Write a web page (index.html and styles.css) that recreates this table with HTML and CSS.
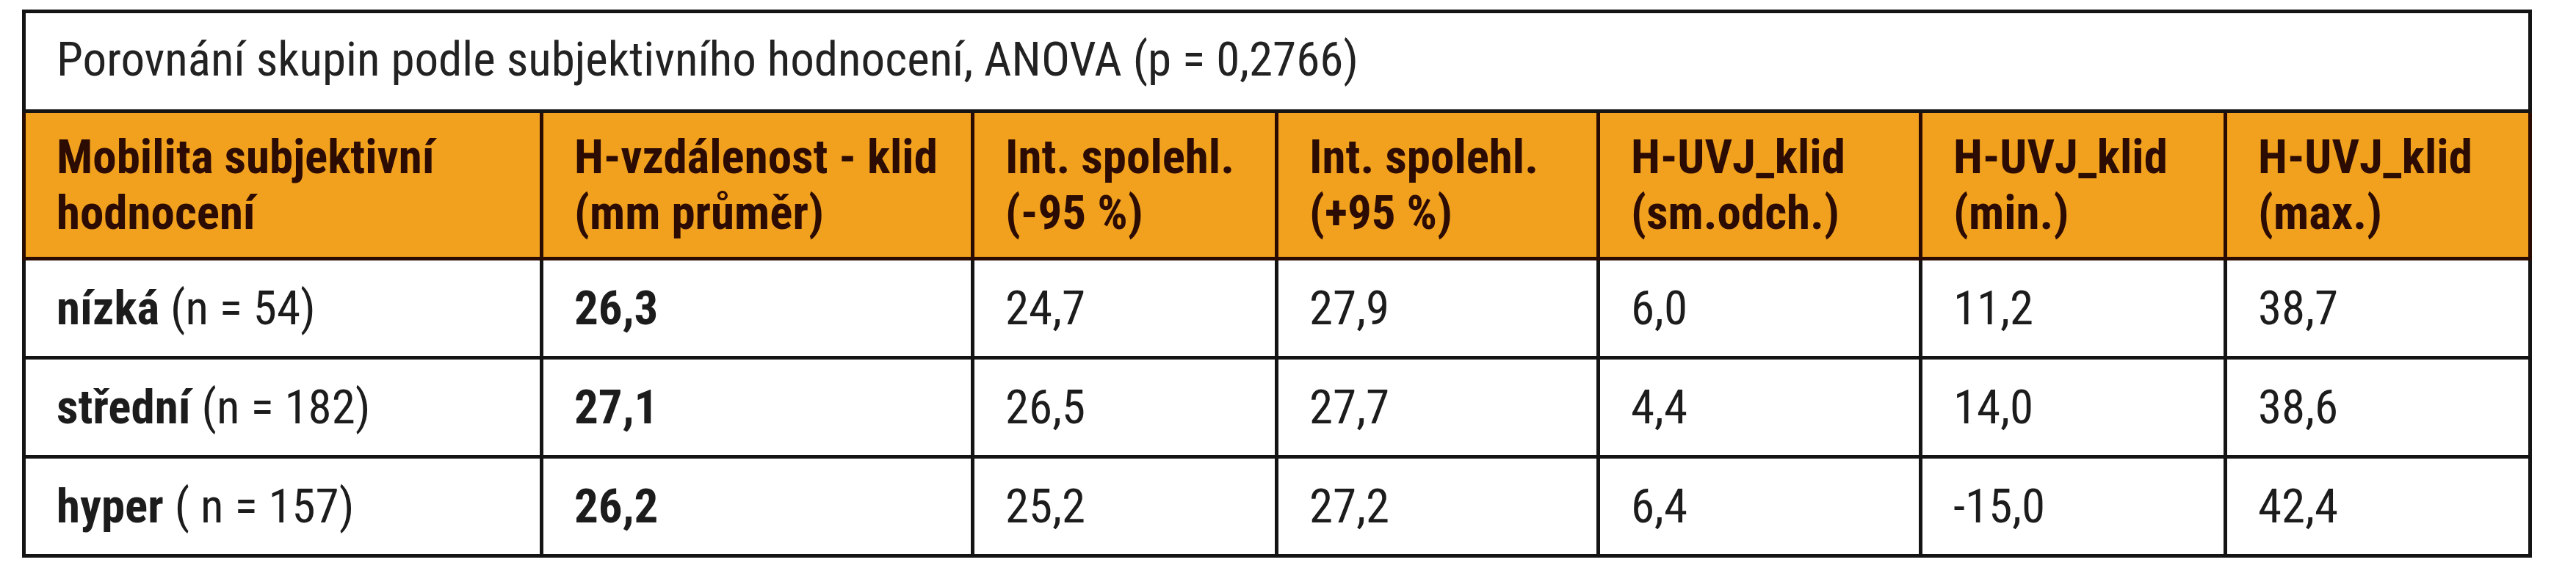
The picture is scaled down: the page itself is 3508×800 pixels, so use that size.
FILE: index.html
```html
<!DOCTYPE html>
<html lang="cs">
<head>
<meta charset="utf-8">
<title>Porovnání skupin</title>
<link rel="stylesheet" href="styles.css">
</head>
<body>
<table class="stats">
  <colgroup>
    <col class="c1"><col class="c2"><col class="c3"><col class="c4"><col class="c5"><col class="c6"><col class="c7">
  </colgroup>
  <tr class="title-row">
    <td colspan="7">Porovnání skupin podle subjektivního hodnocení, ANOVA (p = 0,2766)</td>
  </tr>
  <tr class="head-row">
    <th>Mobilita subjektivní<br>hodnocení</th>
    <th>H-vzdálenost - klid<br>(mm průměr)</th>
    <th>Int. spolehl.<br>(-95 %)</th>
    <th>Int. spolehl.<br>(+95 %)</th>
    <th>H-UVJ_klid<br>(sm.odch.)</th>
    <th>H-UVJ_klid<br>(min.)</th>
    <th>H-UVJ_klid<br>(max.)</th>
  </tr>
  <tr class="data-row">
    <td><b>nízká</b> (n = 54)</td>
    <td><b>26,3</b></td>
    <td>24,7</td>
    <td>27,9</td>
    <td>6,0</td>
    <td>11,2</td>
    <td>38,7</td>
  </tr>
  <tr class="data-row">
    <td><b>střední</b> (n = 182)</td>
    <td><b>27,1</b></td>
    <td>26,5</td>
    <td>27,7</td>
    <td>4,4</td>
    <td>14,0</td>
    <td>38,6</td>
  </tr>
  <tr class="data-row">
    <td><b>hyper</b> ( n = 157)</td>
    <td><b>26,2</b></td>
    <td>25,2</td>
    <td>27,2</td>
    <td>6,4</td>
    <td>-15,0</td>
    <td>42,4</td>
  </tr>
</table>
</body>
</html>
```
FILE: styles.css
```css
html, body {
  margin: 0;
  padding: 0;
  background: #ffffff;
}

body {
  font-family: "Roboto Condensed", "Noto Sans Condensed", "Open Sans Condensed", "DejaVu Sans Condensed", sans-serif;
  font-size: 65px;
  line-height: 76px;
  color: #1c1c1c;
}

.stats {
  margin: 13px 0 0 30px;
  width: 3418px;
  border-collapse: collapse;
  table-layout: fixed;
  border: 5px solid #141414;
}

.c1 { width: 705px; }
.c2 { width: 587px; }
.c3 { width: 414px; }
.c4 { width: 438px; }
.c5 { width: 439px; }
.c6 { width: 415px; }
.c7 { width: 415px; }

.stats td,
.stats th {
  border: 5px solid #141414;
  padding: 0 10px 0 42px;
  text-align: left;
  vertical-align: middle;
  white-space: nowrap;
}

.stats b {
  font-weight: 700;
}

.title-row td {
  height: 125px;
  padding-bottom: 6px;
  font-weight: 400;
  color: #222222;
}

.head-row th {
  height: 196px;
  background: #f1a11e;
  color: #2c0c02;
  font-weight: 700;
  border-color: #2a0b02;
}

.data-row td {
  height: 130px;
}
```
